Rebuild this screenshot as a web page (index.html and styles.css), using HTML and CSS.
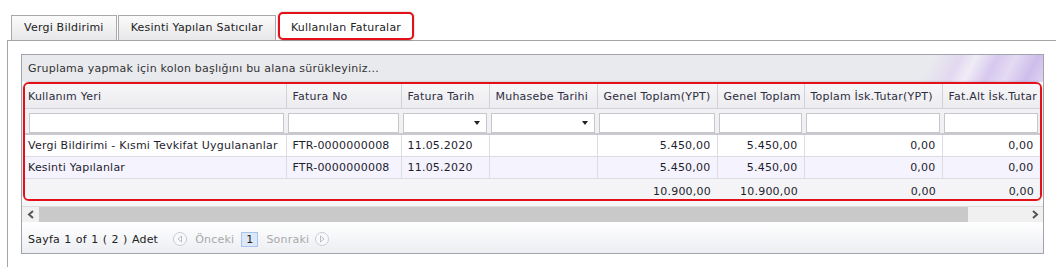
FILE: index.html
```html
<!DOCTYPE html>
<html lang="tr">
<head>
    <meta charset="UTF-8">
    <meta name="viewport" content="width=device-width, initial-scale=1.0">
    <title>Kullanılan Faturalar</title>
    <link rel="stylesheet" href="styles.css">
</head>
<body>
    <div class="page">
        <ul class="tabs">
            <li class="tab">Vergi Bildirimi</li>
            <li class="tab">Kesinti Yapılan Satıcılar</li>
            <li class="tab active">Kullanılan Faturalar</li>
        </ul>
        <div class="panel">
            <div class="grid">
                <div class="group-panel">Gruplama yapmak için kolon başlığını bu alana sürükleyiniz...</div>
                <div class="grid-frame">
                    <table class="grid-table">
                        <colgroup>
                            <col class="col-place">
                            <col class="col-invoice">
                            <col class="col-date">
                            <col class="col-acc-date">
                            <col class="col-total-ypt">
                            <col class="col-total">
                            <col class="col-disc-ypt">
                            <col class="col-disc">
                        </colgroup>
                        <thead>
                            <tr class="header-row">
                                <th class="first">Kullanım Yeri</th>
                                <th>Fatura No</th>
                                <th>Fatura Tarih</th>
                                <th>Muhasebe Tarihi</th>
                                <th>Genel Toplam(YPT)</th>
                                <th>Genel Toplam</th>
                                <th>Toplam İsk.Tutar(YPT)</th>
                                <th>Fat.Alt İsk.Tutar</th>
                            </tr>
                            <tr class="filter-row">
                                <td class="first"><input class="filter-input" type="text"></td>
                                <td><input class="filter-input" type="text"></td>
                                <td><div class="filter-select"><span class="caret"></span></div></td>
                                <td><div class="filter-select"><span class="caret"></span></div></td>
                                <td><input class="filter-input" type="text"></td>
                                <td><input class="filter-input" type="text"></td>
                                <td><input class="filter-input" type="text"></td>
                                <td><input class="filter-input" type="text"></td>
                            </tr>
                        </thead>
                        <tbody>
                            <tr class="data-row">
                                <td class="first">Vergi Bildirimi - Kısmi Tevkifat Uygulananlar</td>
                                <td>FTR-0000000008</td>
                                <td>11.05.2020</td>
                                <td></td>
                                <td class="num">5.450,00</td>
                                <td class="num">5.450,00</td>
                                <td class="num">0,00</td>
                                <td class="num">0,00</td>
                            </tr>
                            <tr class="data-row alt">
                                <td class="first">Kesinti Yapılanlar</td>
                                <td>FTR-0000000008</td>
                                <td>11.05.2020</td>
                                <td></td>
                                <td class="num">5.450,00</td>
                                <td class="num">5.450,00</td>
                                <td class="num">0,00</td>
                                <td class="num">0,00</td>
                            </tr>
                        </tbody>
                        <tfoot>
                            <tr class="footer-row">
                                <td class="first"></td>
                                <td></td>
                                <td></td>
                                <td></td>
                                <td class="num">10.900,00</td>
                                <td class="num">10.900,00</td>
                                <td class="num">0,00</td>
                                <td class="num">0,00</td>
                            </tr>
                        </tfoot>
                    </table>
                </div>
                <div class="scroll-gap"></div>
                <div class="hscroll">
                    <div class="scroll-arrow">
                        <svg width="8" height="9" viewBox="0 0 8 9"><polyline points="6,1 2,4.5 6,8" fill="none" stroke="#555" stroke-width="2"/></svg>
                    </div>
                    <div class="scroll-track"><div class="scroll-thumb"></div></div>
                    <div class="scroll-arrow">
                        <svg width="8" height="9" viewBox="0 0 8 9"><polyline points="2,1 6,4.5 2,8" fill="none" stroke="#555" stroke-width="2"/></svg>
                    </div>
                </div>
                <div class="pager">
                    <span class="pager-summary">Sayfa 1 of 1 ( 2 ) Adet</span>
                    <svg class="pager-btn prev" width="14" height="14" viewBox="0 0 14 14">
                        <circle cx="7" cy="7" r="6.5" fill="#f9f9fb" stroke="#c9ccd6"/>
                        <polygon points="8.5,4 5,7 8.5,10" fill="#fff" stroke="#b9bcc8"/>
                    </svg>
                    <span class="pager-link">Önceki</span>
                    <span class="pager-page">1</span>
                    <span class="pager-link">Sonraki</span>
                    <svg class="pager-btn next" width="14" height="14" viewBox="0 0 14 14">
                        <circle cx="7" cy="7" r="6.5" fill="#f9f9fb" stroke="#c9ccd6"/>
                        <polygon points="5.5,4 9,7 5.5,10" fill="#fff" stroke="#b9bcc8"/>
                    </svg>
                </div>
            </div>
        </div>
    </div>
</body>
</html>
```

FILE: styles.css
```css
body {
    margin: 0;
    font-family: "DejaVu Sans", Verdana, sans-serif;
    font-size: 11px;
    letter-spacing: 0.22px;
    color: #222;
    background-color: #fff;
    overflow: hidden;
}

.page {
    padding: 12px 0 0 7px;
}

.tabs {
    list-style: none;
    margin: 0;
    padding: 0 0 0 4px;
    display: flex;
    align-items: flex-end;
    gap: 1px;
    height: 28px;
}

.tab {
    height: 25px;
    box-sizing: border-box;
    padding: 0 12px;
    line-height: 24px;
    border: 1px solid #a9a9a9;
    border-bottom: none;
    background: linear-gradient(#fbfbfb, #e7e7e9);
    color: #222;
    white-space: nowrap;
}

.tab.active {
    height: 28px;
    margin-left: 1px;
    padding: 2px 11px 0;
    line-height: 24px;
    border: 2px solid #e3101a;
    border-radius: 5px;
    background: #fff;
    box-shadow: 0 0 2px rgba(0, 0, 0, 0.35);
}

.panel {
    border-top: 1px solid #a5a5a5;
    border-left: 1px solid #a5a5a5;
    padding: 13px 12px 15px 13px;
}

.grid {
    border: 1px solid #a3a3ab;
}

.group-panel {
    height: 27px;
    line-height: 27px;
    padding-left: 6px;
    color: #333;
    background-color: #e9eaee;
    background-image: linear-gradient(118deg, rgba(233, 234, 238, 0) 0%, rgba(233, 234, 238, 0) 20%, #e2d8f0 38%, #f0ecf6 48%, #d6c8ef 62%, #e4dbf3 74%, #cdbdeb 88%, #ddd3f0 100%);
    background-size: 140px 100%;
    background-position: right top;
    background-repeat: no-repeat;
}

.grid-frame {
    margin: 0 1px;
    border: 2px solid #e3101a;
    border-radius: 6px;
    overflow: hidden;
    box-shadow: 0 0 2px rgba(0, 0, 0, 0.3), inset 0 0 3px rgba(0, 0, 0, 0.2);
}

.grid-table {
    width: 1015px;
    table-layout: fixed;
    border-collapse: collapse;
}

.col-place { width: 261px; }
.col-invoice { width: 115px; }
.col-date { width: 88px; }
.col-acc-date { width: 108px; }
.col-total-ypt { width: 120px; }
.col-total { width: 87px; }
.col-disc-ypt { width: 138px; }
.col-disc { width: 98px; }

.grid-table th,
.grid-table td {
    white-space: nowrap;
    overflow: hidden;
    text-overflow: clip;
}

.header-row th {
    height: 24px;
    padding: 0 6px;
    text-align: left;
    font-weight: normal;
    color: #2d2d3d;
    background: linear-gradient(#f6f6f8, #ececf0);
    border-right: 1px solid #d2d2d8;
    border-bottom: 1px solid #d2d2d8;
}

.header-row th.first {
    padding-left: 3px;
}

.filter-row td {
    height: 22px;
    padding: 2px 2px 0;
    vertical-align: bottom;
    background-color: #f1f1f4;
    border-bottom: 2px solid #c9c9cf;
}

.filter-row td.first {
    padding-left: 4px;
}

.filter-input,
.filter-select {
    display: block;
    width: 100%;
    height: 20px;
    box-sizing: border-box;
    margin: 0;
    border: 1px solid #c6c6cd;
    background-color: #fff;
}

.filter-select {
    display: flex;
    align-items: center;
    justify-content: flex-end;
    padding-right: 6px;
}

.caret {
    width: 0;
    height: 0;
    border-left: 3.5px solid transparent;
    border-right: 3.5px solid transparent;
    border-top: 4px solid #222;
}

.data-row td {
    height: 21px;
    padding: 0 6px;
    color: #1e1e2e;
    border-right: 1px solid #dcdce2;
    border-bottom: 1px solid #dcdce2;
    background-color: #fff;
}

.data-row td.first {
    padding-left: 3px;
}

.data-row.alt td {
    background-color: #f5f3fd;
}

.num {
    text-align: right;
}

.footer-row td {
    height: 14px;
    padding: 6px 6px 0;
    line-height: 14px;
    vertical-align: top;
    color: #1e1e2e;
    background-color: #f4f4f6;
}

.scroll-gap {
    height: 5px;
    background-color: #f6f6f8;
    border-bottom: 1px solid #dcdcdc;
}

.hscroll {
    display: flex;
    height: 15px;
    background-color: #f0f0f0;
}

.scroll-arrow {
    width: 17px;
    display: flex;
    align-items: center;
    justify-content: center;
}

.scroll-track {
    flex: 1;
}

.scroll-thumb {
    width: 929px;
    height: 100%;
    background-color: #c9c9c9;
}

.pager {
    height: 28px;
    padding: 3px 0 0 6px;
    display: flex;
    align-items: center;
    background: linear-gradient(#ffffff, #eceef3);
}

.pager-summary {
    color: #222;
    margin-right: 15px;
    word-spacing: 0.6px;
}

.pager-btn.prev {
    margin-right: 8px;
}

.pager-btn.next {
    margin-left: 6px;
}

.pager-link {
    color: #a9a9a9;
}

.pager-page {
    width: 15px;
    height: 13px;
    line-height: 13px;
    margin: 0 8px 0 7px;
    text-align: center;
    color: #222;
    background-color: #dce8f8;
    border: 1px solid #a9c4ea;
}
```
